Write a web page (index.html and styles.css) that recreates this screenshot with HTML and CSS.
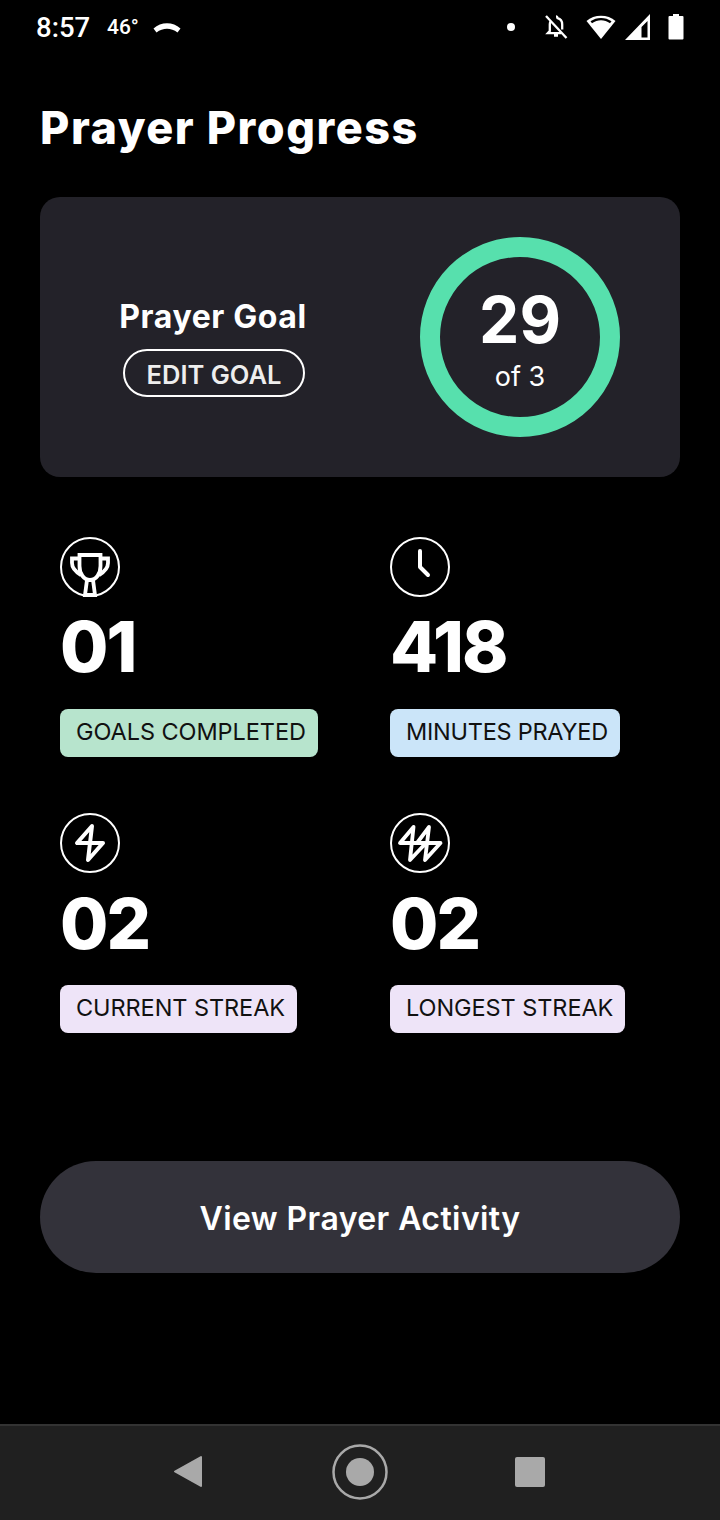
FILE: index.html
```html
<!DOCTYPE html>
<html lang="en">
<head>
<meta charset="utf-8">
<title>Prayer Progress</title>
<link rel="stylesheet" href="styles.css">
</head>
<body>
<div class="screen">
  <header class="status">
    <div class="status-left">
      <span class="time">8:57</span>
      <span class="temp">46°</span>
      <svg class="arc" width="28" height="14" viewBox="0 0 28 14"><path d="M0.5 8.5 C8 1.5 20 1.5 27.5 8.5 L24.5 12.5 C18 7.5 10 7.5 3.5 12.5 Z" fill="#fff"/></svg>
    </div>
    <div class="status-right">
      <span class="dot"></span>
      <svg class="bell" width="24" height="26" viewBox="0 0 24 26"><path d="M12 2.5a1.6 1.6 0 0 1 1.600 1.700c3 .8 4.600 3.400 4.600 6.300v5M6.400 7.500c-.4.9-.6 1.900-.6 3V17l-2 2.200h13.500M10 21.500h4" fill="none" stroke="#fff" stroke-width="2.300"/><path d="M2 2 L22.500 24" stroke="#fff" stroke-width="2.300"/></svg>
      <svg class="wifi" width="30" height="26" viewBox="0 0 30 26"><path d="M0.500 7 C8 0 22 0 29.500 7 L15 25 Z" fill="#fff"/><path d="M4.500 7.300 C10.500 2.800 19.500 2.800 25.500 7.300 L24 9.300 C18.500 5.300 11.500 5.300 6 9.300 Z" fill="#000"/></svg>
      <svg class="signal" width="26" height="26" viewBox="0 0 26 26"><path d="M25 0 V26 H0 Z M22.500 7 L16.500 13 V23.500 H22.500 Z" fill="#fff" fill-rule="evenodd"/></svg>
      <svg class="battery" width="16" height="26" viewBox="0 0 16 26"><path d="M5 0 H11 V2 H14.500 A1 1 0 0 1 15.500 3 V24.500 A1 1 0 0 1 14.500 25.500 H1.500 A1 1 0 0 1 .5 24.500 V3 A1 1 0 0 1 1.500 2 H5 Z" fill="#fff"/></svg>
    </div>
  </header>

  <main class="content">
    <h1 class="title">Prayer Progress</h1>

    <section class="goal-card">
      <div class="goal-info">
        <div class="goal-label">Prayer Goal</div>
        <div class="edit-btn">EDIT GOAL</div>
      </div>
      <div class="ring">
        <div class="ring-num">29</div>
        <div class="ring-of">of 3</div>
      </div>
    </section>

    <section class="stats">
      <div class="stat">
        <svg class="stat-icon" width="60" height="60" viewBox="0 0 60 60"><circle cx="30" cy="30" r="29" fill="none" stroke="#fff" stroke-width="2"/><path d="M19.500 18 H40.500 V29 C40.500 37 36 43 30 43 C24 43 19.500 37 19.500 29 Z M19 21.500 H12 V26 C12 31 16 35 21 38 M41 21.500 H48 V26 C48 31 44 35 39 38 M27 43 L25 58 H35 L33 43" fill="none" stroke="#fff" stroke-width="3.800" stroke-linejoin="miter"/></svg>
        <div class="stat-num">01</div>
        <div class="chip chip-green">GOALS COMPLETED</div>
      </div>
      <div class="stat">
        <svg class="stat-icon" width="60" height="60" viewBox="0 0 60 60"><circle cx="30" cy="30" r="29" fill="none" stroke="#fff" stroke-width="2"/><path d="M30 14 V30 L38 38" fill="none" stroke="#fff" stroke-width="4" stroke-linecap="round" stroke-linejoin="round"/></svg>
        <div class="stat-num">418</div>
        <div class="chip chip-blue">MINUTES PRAYED</div>
      </div>
      <div class="stat">
        <svg class="stat-icon" width="60" height="60" viewBox="0 0 60 60"><circle cx="30" cy="30" r="29" fill="none" stroke="#fff" stroke-width="2"/><path d="M32 13 L17 30 H43 L28 47 Z" fill="none" stroke="#fff" stroke-width="4" stroke-linejoin="round"/></svg>
        <div class="stat-num stat-num-low">02</div>
        <div class="chip chip-lilac">CURRENT STREAK</div>
      </div>
      <div class="stat">
        <svg class="stat-icon" width="60" height="60" viewBox="0 0 60 60"><circle cx="30" cy="30" r="29" fill="none" stroke="#fff" stroke-width="2"/><path d="M23.500 14 L10 30 H50.500 L35 47 L39 14 L27 30 M23.500 14 L20 47 L36 30" fill="none" stroke="#fff" stroke-width="3.800" stroke-linejoin="round" stroke-linecap="round"/></svg>
        <div class="stat-num stat-num-low">02</div>
        <div class="chip chip-lilac">LONGEST STREAK</div>
      </div>
    </section>

    <div class="activity-btn">View Prayer Activity</div>
  </main>

  <nav class="navbar">
    <svg width="32" height="34" viewBox="0 0 32 34"><path d="M29 2 V31 L3 16.500 Z" fill="#a9a9a9" stroke="#a9a9a9" stroke-width="2" stroke-linejoin="round"/></svg>
    <svg width="58" height="58" viewBox="0 0 58 58"><circle cx="29" cy="29" r="26.500" fill="none" stroke="#a9a9a9" stroke-width="2.500"/><circle cx="29" cy="29" r="14" fill="#a9a9a9"/></svg>
    <span class="nav-square"></span>
  </nav>
</div>
</body>
</html>
```
FILE: styles.css
```css
* { box-sizing: border-box; margin: 0; padding: 0; }
html, body { background: #000; }
body { width: 720px; height: 1520px; overflow: hidden; font-family: "Inter", "Liberation Sans", sans-serif; color: #fff; }
.screen { width: 720px; height: 1520px; display: flex; flex-direction: column; background: #000; }

.status { height: 54px; display: flex; justify-content: space-between; align-items: center; padding: 0 36px 0 36px; font-family: "Roboto", sans-serif; flex: none; }
.status-left { display: flex; align-items: center; }
.time { font-size: 27.500px; font-weight: 500; width: 71px; padding-top: 1px; }
.temp { font-size: 21px; font-weight: 500; width: 46px; }
.status-right { display: flex; align-items: center; }
.dot { width: 8px; height: 8px; border-radius: 50%; background: #fff; margin-right: 29px; }
.bell { margin-right: 18px; }
.wifi { margin-right: 9px; }
.signal { margin-right: 17px; }
.battery { margin-right: 0; }

.content { flex: 1; padding: 0 40px; display: flex; flex-direction: column; }
.title { font-size: 45px; font-weight: 800; line-height: 60px; margin-top: 44px; letter-spacing: 1.550px; white-space: nowrap; }
.goal-card { margin-top: 39px; height: 280px; background: #232229; border-radius: 20px; display: flex; align-items: center; justify-content: space-between; padding: 0 60px 0 80px; }
.goal-info { display: flex; flex-direction: column; align-items: center; width: 186px; margin-top: 20px; }
.goal-label { font-size: 32px; font-weight: 700; line-height: 40px; white-space: nowrap; letter-spacing: 0.600px; }
.edit-btn { margin-top: 12px; height: 48px; width: 182px; padding-top: 2px; border: 2px solid #fff; border-radius: 24px; display: flex; align-items: center; justify-content: center; font-size: 25.500px; font-weight: 600; color: #eee; transform: translateX(1px); }
.ring { width: 200px; height: 200px; border-radius: 50%; border: 20px solid #57e0ad; padding-top: 5px; display: flex; flex-direction: column; align-items: center; justify-content: center; }
.ring-num { font-size: 64px; font-weight: 700; line-height: 70px; }
.ring-of { font-size: 27px; line-height: 36px; margin-top: 4px; }

.stats { margin-top: 60px; padding-left: 20px; display: grid; grid-template-columns: 330px 1fr; row-gap: 56px; }
.stat { display: flex; flex-direction: column; align-items: flex-start; }
.stat-icon { display: block; }
.stat-num { font-size: 70px; font-weight: 800; line-height: 80px; margin-top: 10px; letter-spacing: -2px; }
.stat-num-low { position: relative; top: 1px; }
.chip { margin-top: 22px; height: 48px; padding: 0 12px 4px 16px; border-radius: 8px; display: flex; align-items: center; color: #111; font-size: 23.500px; letter-spacing: -0.070px; white-space: nowrap; }
.chip-green { background: #b7e4cd; }
.chip-blue { background: #cbe5f9; letter-spacing: -0.250px; }
.chip-lilac { background: #eee4f8; }

.activity-btn { margin-top: 128px; height: 112px; border-radius: 56px; background: #33323a; display: flex; align-items: center; justify-content: center; font-size: 32px; font-weight: 600; letter-spacing: 0.400px; padding-top: 2px; }

.navbar { flex: none; height: 96px; background: #202020; border-top: 2px solid #333; padding: 0 175px 2px 172px; display: flex; align-items: center; justify-content: space-between; }
.nav-square { width: 30px; height: 30px; background: #a9a9a9; border-radius: 2px; }
```
